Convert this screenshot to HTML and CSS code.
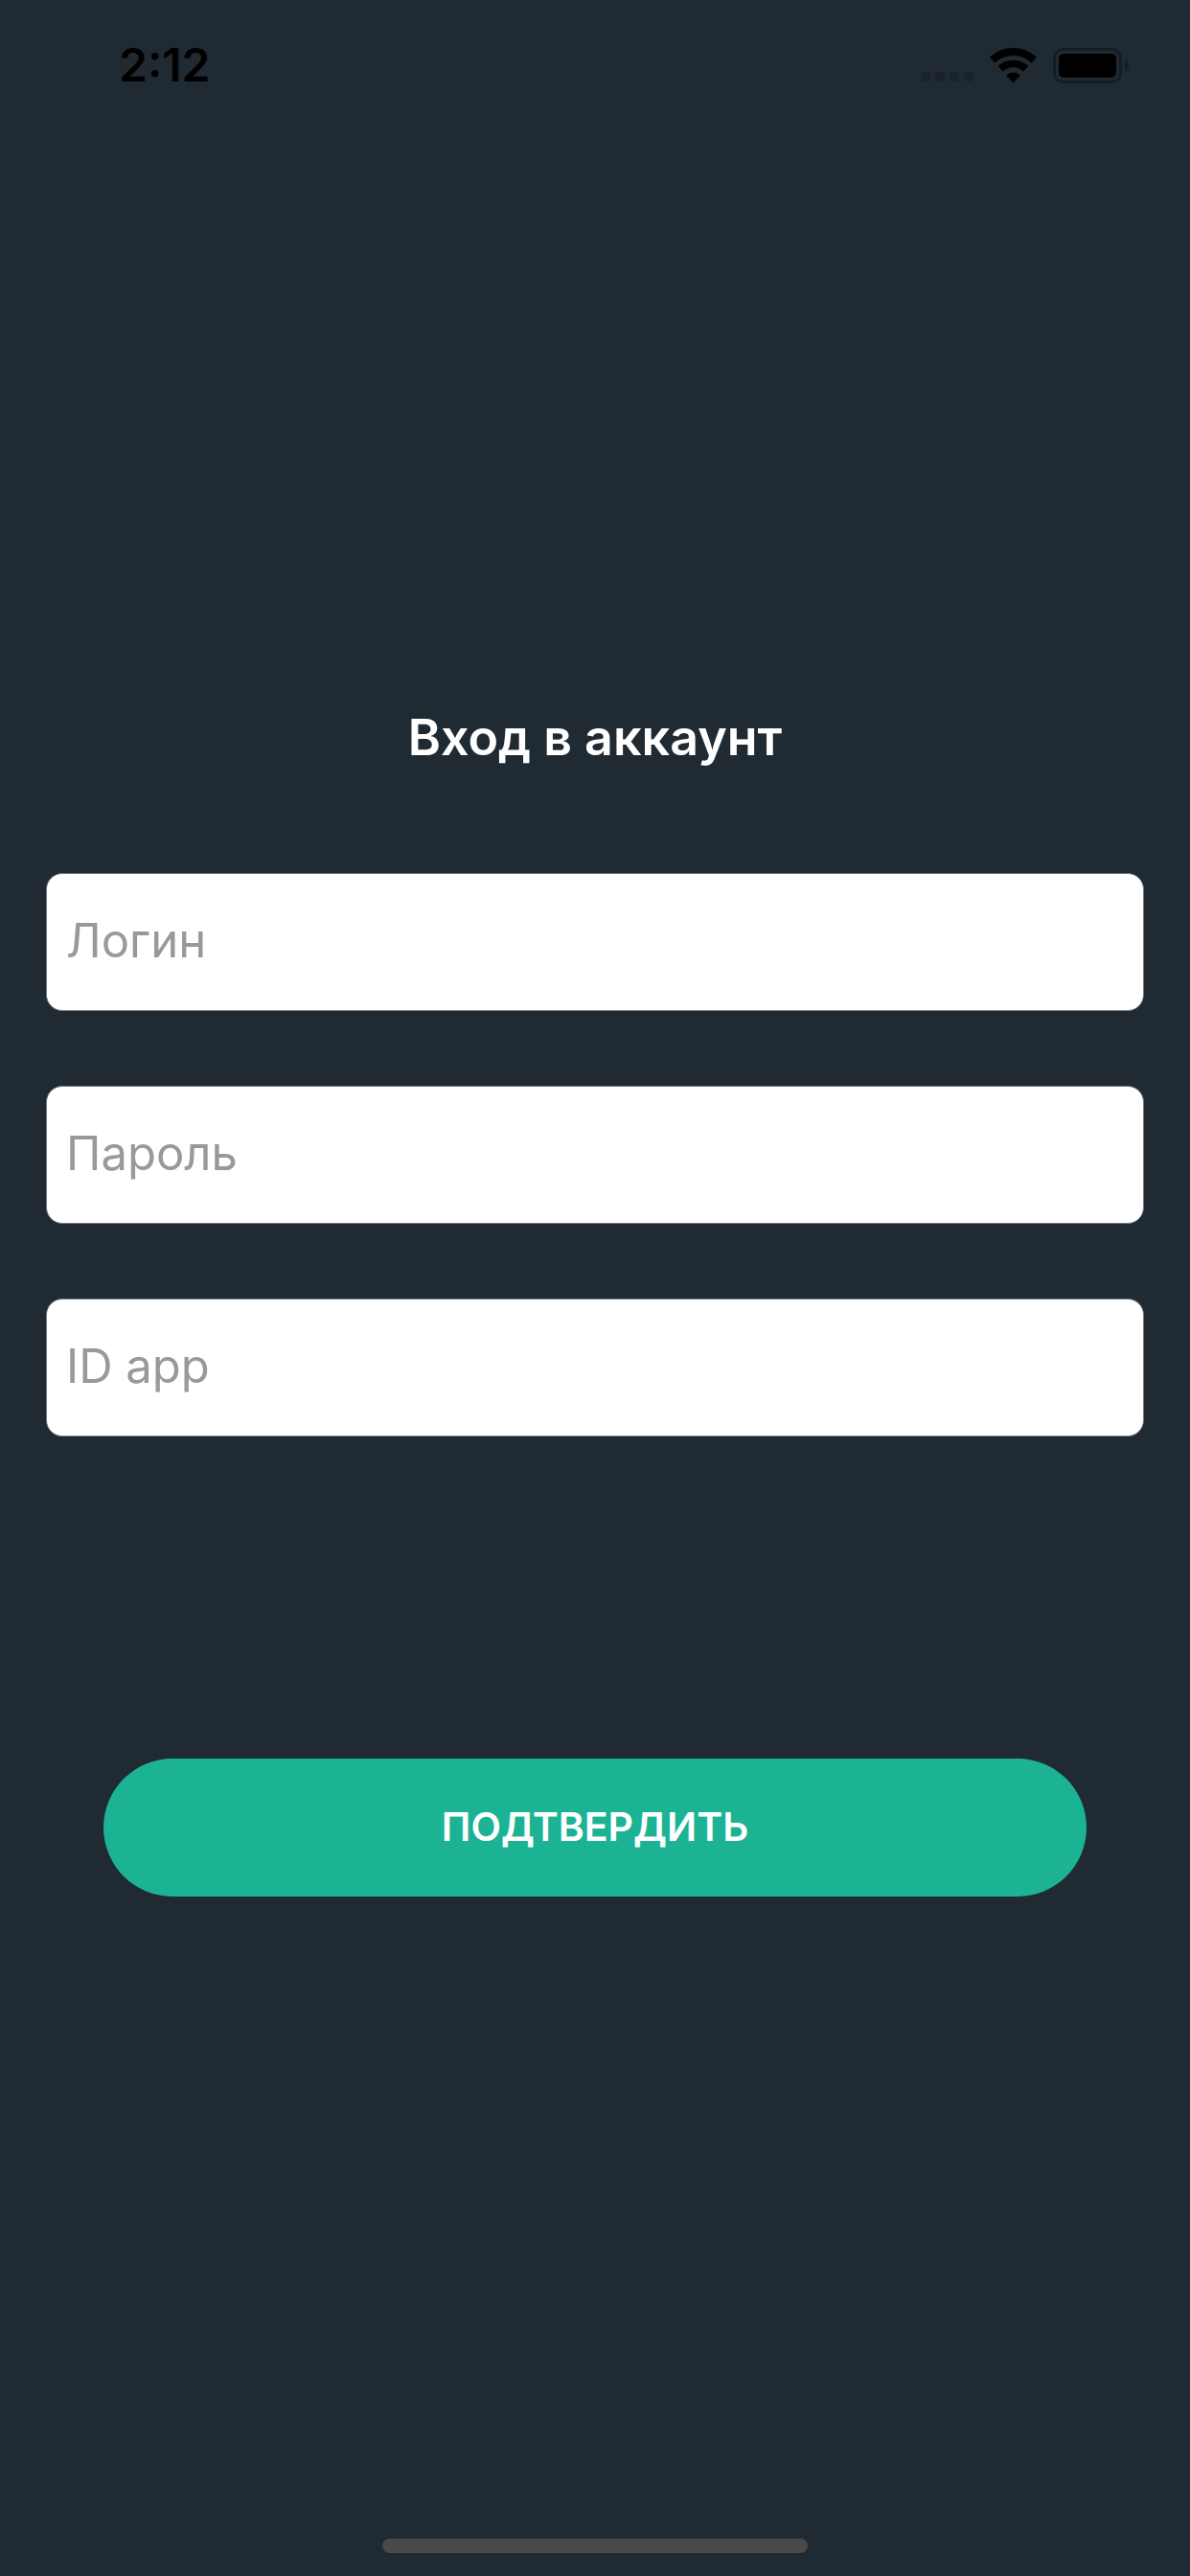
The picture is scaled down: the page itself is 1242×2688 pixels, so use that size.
FILE: index.html
```html
<!DOCTYPE html>
<html lang="ru">
<head>
    <meta charset="UTF-8">
    <meta name="viewport" content="width=device-width, initial-scale=1">
    <title>Вход в аккаунт</title>

    <link rel="stylesheet" href="styles.css">
</head>
<body>


<header class="status-bar">
    <time class="clock">2:12</time>
    <div class="status-icons">
        <svg class="signal" width="55" height="12" viewBox="0 0 55 12">
            <rect x="0" width="10" height="10" rx="3"/>
            <rect x="15" width="10" height="10" rx="3"/>
            <rect x="30" width="10" height="10" rx="3"/>
            <rect x="45" width="10" height="10" rx="3"/>
        </svg>
        <svg class="wifi" width="49" height="37" viewBox="0 0 49 37">
            <path class="wave" stroke-width="8" d="M2.7 12.6A32 32 0 0 1 46.3 12.6"/>
            <path class="wave" stroke-width="7.5" d="M11.2 21.7A19.5 19.5 0 0 1 37.8 21.7"/>
            <path d="M17.6 29.2Q17.2 28.7 17.7 28.2Q24.5 22.6 31.3 28.2Q31.8 28.7 31.4 29.2L25 35.7Q24.5 36.2 24 35.7Z"/>
        </svg>
        <svg class="battery" width="79" height="37" viewBox="0 0 79 37">
            <rect class="battery-case" x="1.5" y="1.5" width="69" height="34" rx="9"/>
            <rect x="6" y="6" width="60" height="25" rx="5"/>
            <path class="battery-tip" d="M75 12Q79 14.500 79 18.500T75 25Z"/>
        </svg>
    </div>
</header>

<main class="login">
    <h1>Вход в аккаунт</h1>
    <form class="login-form">
        <input type="text" name="login" placeholder="Логин" aria-label="Логин">
        <input type="password" name="password" placeholder="Пароль" aria-label="Пароль">
        <input type="text" name="app-id" placeholder="ID app" aria-label="ID app">
        <button type="submit">ПОДТВЕРДИТЬ</button>
    </form>
</main>

<div class="home-bar"></div>


</body>
</html>
```
FILE: styles.css
```css
* {
    margin: 0;
    padding: 0;
    box-sizing: border-box;
}

body {
    display: flex;
    flex-direction: column;
    min-height: 100vh;
    background: #202a33;
    font-family: Inter, "Liberation Sans", sans-serif;
}

.status-bar {
    display: flex;
    justify-content: space-between;
    align-items: center;
    padding: 36px 64px 36px 124px;
}

.clock {
    font-size: 48px;
    line-height: 64px;
    font-weight: 600;
}

.status-icons {
    display: flex;
    align-items: flex-end;
    gap: 17px;
}

.signal {
    fill: #1a222d;
}

.wifi .wave {
    fill: none;
    stroke: #000;
}

.battery .battery-case {
    fill: none;
    stroke: #151c23;
    stroke-width: 3;
}

.battery .battery-tip {
    fill: #151c23;
}

.login {
    padding: 600px 48px 80px;
}

.login h1 {
    margin-bottom: 107px;
    color: #fff;
    font-size: 52px;
    line-height: 68px;
    font-weight: 600;
    text-align: center;
}

.login-form {
    display: flex;
    flex-direction: column;
    gap: 78px;
}

.login-form input {
    width: 100%;
    height: 144px;
    padding: 0 20px 4px;
    border: 1px solid #777c82;
    border-radius: 17px;
    background: #fff;
    color: #202a33;
    font-family: inherit;
    font-size: 49px;
}

.login-form input::placeholder {
    color: #999;
    opacity: 1;
}

.login-form button {
    height: 144px;
    margin: 258px 60px 0;
    padding-bottom: 2px;
    border: none;
    border-radius: 72px;
    background: #1bb394;
    color: #fff;
    font-family: inherit;
    font-size: 41px;
    font-weight: 600;
}

.home-bar {
    width: 444px;
    height: 15px;
    margin: auto auto 24px;
    border-radius: 8px;
    background: #494949;
}
```
